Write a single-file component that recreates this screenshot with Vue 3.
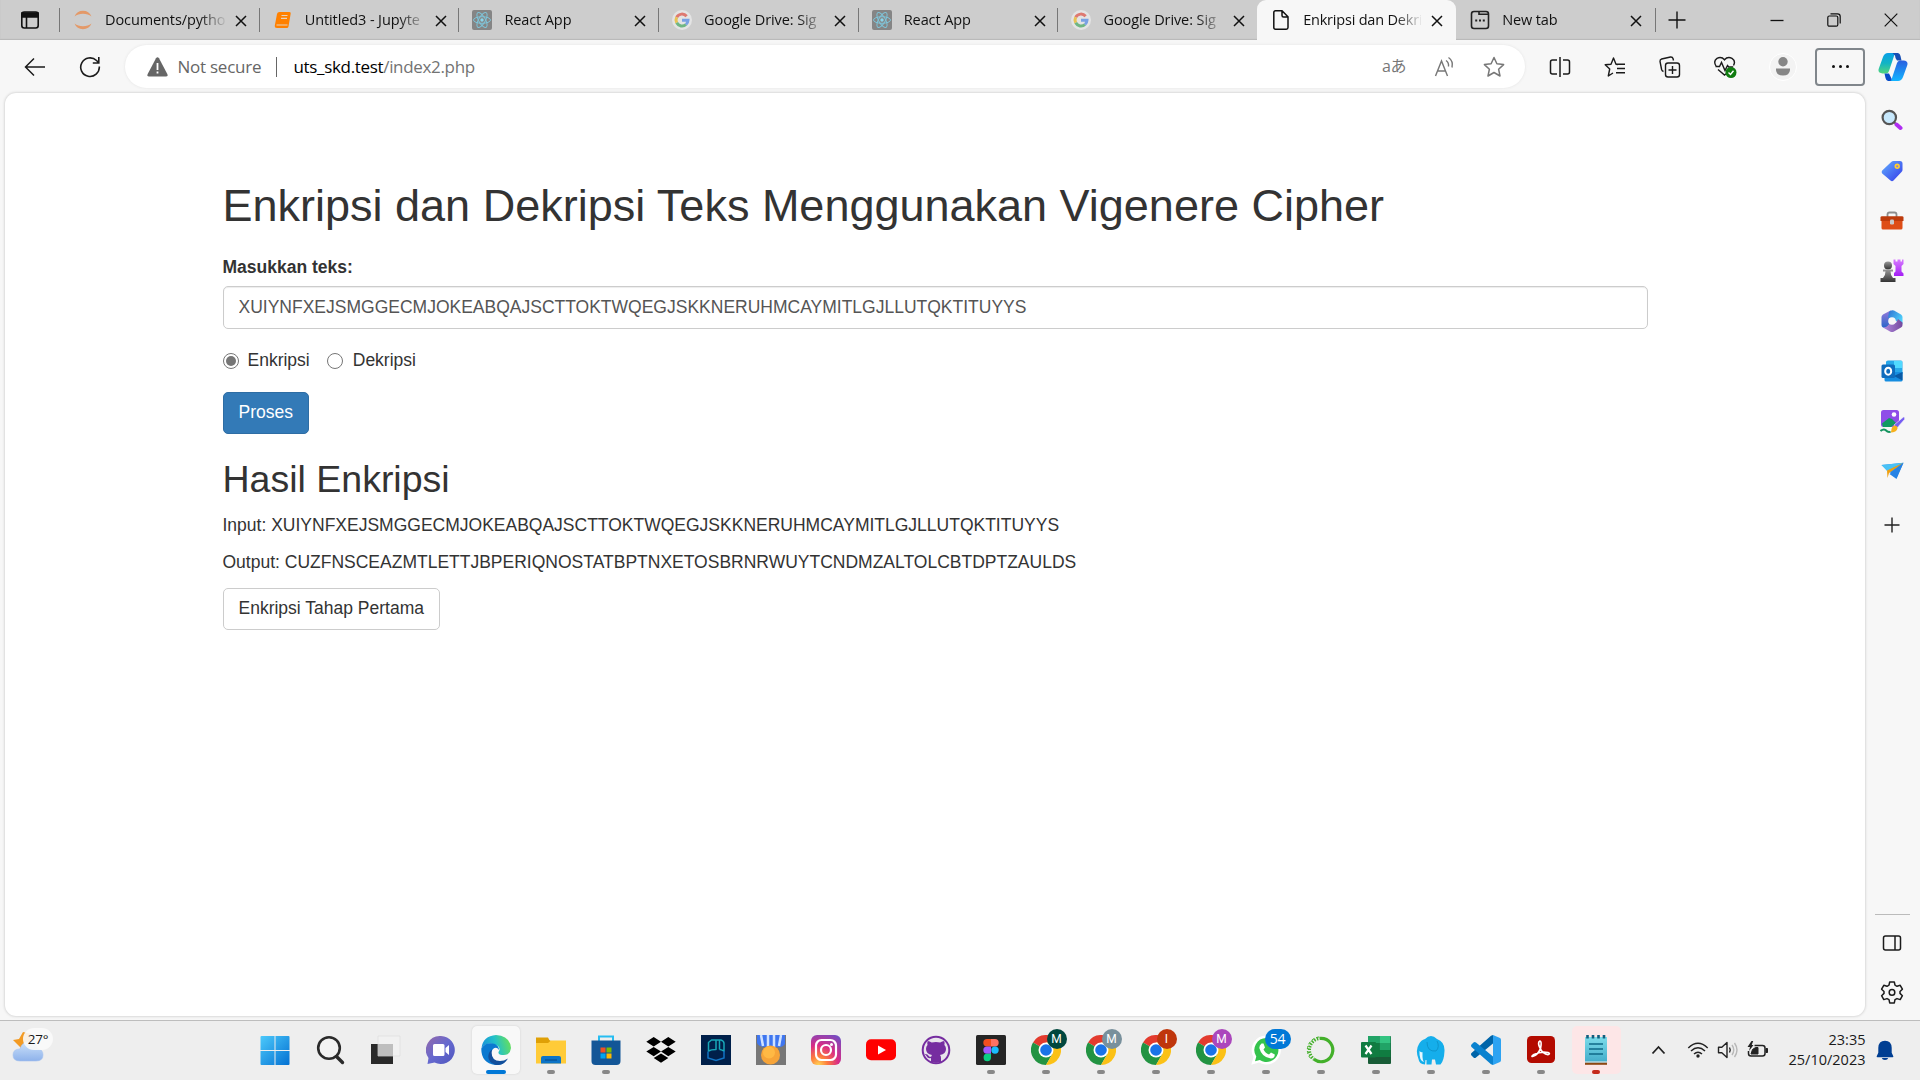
<script setup>
import { ref } from 'vue'

const tabs = [
  { icon: 'jupyter', title: 'Documents/pytho' },
  { icon: 'book', title: 'Untitled3 - Jupyte' },
  { icon: 'react', title: 'React App' },
  { icon: 'google', title: 'Google Drive: Sig' },
  { icon: 'react', title: 'React App' },
  { icon: 'google', title: 'Google Drive: Sig' },
  { icon: 'page', title: 'Enkripsi dan Dekri', active: true },
  { icon: 'newtab', title: 'New tab', bare: true }
]
const profiles = [
  { letter: 'M', color: '#00473e' },
  { letter: 'M', color: '#78909c' },
  { letter: 'I', color: '#bf360c' },
  { letter: 'M', color: '#ab47bc' }
]
const text = ref('XUIYNFXEJSMGGECMJOKEABQAJSCTTOKTWQEGJSKKNERUHMCAYMITLGJLLUTQKTITUYYS')
const output = 'CUZFNSCEAZMTLETTJBPERIQNOSTATBPTNXETOSBRNRWUYTCNDMZALTOLCBTDPTZAULDS'
const mode = ref('enkripsi')
</script>

<template>
  <div class="screen">
    <header class="tabbar">
      <div class="tab-actions">
        <svg width="20" height="20" viewBox="0 0 20 20" fill="none" stroke="#111" stroke-width="1.6"><rect x="1.8" y="2" width="16.4" height="16" rx="2.5" /><path d="M2 3h16v4H2z" fill="#111" /><path d="M6.5 7v11" /></svg>
      </div>
      <div v-for="(t, i) in tabs" :key="i" class="tab" :class="{ active: t.active, bare: t.bare }">
        <svg v-if="t.icon === 'jupyter'" class="fav dim" viewBox="0 0 20 20" fill="#f37726"><path d="M1.5 6.5C3 2.8 6 .8 10 .8s7 2 8.500 5.700C16 4.700 13.500 3.700 10 3.700S4 4.700 1.500 6.500zM1.500 13.500c1.500 3.700 4.500 5.700 8.500 5.700s7-2 8.500-5.700c-2.500 1.800-5 2.800-8.500 2.800s-6-1-8.500-2.800z" /></svg>
        <svg v-else-if="t.icon === 'book'" class="fav" viewBox="0 0 20 20"><path d="M6.500 2h10q1.500 0 1.200 1.500L15.500 16.500q-.300 1.500-1.800 1.500H4q-2.500 0-2.200-2.500L4 4Q4.400 2 6.500 2z" fill="#ff8000" /><path d="M8.500 5.500h6M8 8.300h6M3.500 15h11" stroke="#e6d3c0" stroke-width="1.200" /></svg>
        <svg v-else-if="t.icon === 'react'" class="fav" viewBox="0 0 20 20"><rect width="20" height="20" rx="2" fill="#858585" /><g fill="none" stroke="#7fc4d8" stroke-width="1"><ellipse cx="10" cy="10" rx="8.500" ry="3.300" /><ellipse cx="10" cy="10" rx="8.500" ry="3.300" transform="rotate(60 10 10)" /><ellipse cx="10" cy="10" rx="8.500" ry="3.300" transform="rotate(120 10 10)" /></g><circle cx="10" cy="10" r="1.700" fill="#8ad6ec" /></svg>
        <svg v-else-if="t.icon === 'google'" class="fav dim" viewBox="0 0 20 20"><circle cx="10" cy="10" r="10" fill="#f4f4f4" /><g fill="none" stroke-width="3"><path d="M14.600 6.300A6 6 0 0 0 4.700 7.200" stroke="#ea4335" /><path d="M4.700 7.200a6 6 0 0 0 0 5.600" stroke="#fbbc05" /><path d="M4.700 12.800a6 6 0 0 0 9.300 1.700" stroke="#34a853" /><path d="M14 14.500a6 6 0 0 0 2-4.200h-6" stroke="#4285f4" /></g></svg>
        <svg v-else-if="t.icon === 'page'" class="fav" viewBox="0 0 20 20" fill="none" stroke="#111" stroke-width="1.500"><path d="M4.500.800h6.500l6 6v10.700q0 1.700-1.700 1.700H4.500q-1.700 0-1.700-1.700v-15Q2.800.800 4.500.800zM11 1v4.500q0 1.500 1.500 1.500H17" /></svg>
        <svg v-else class="fav" viewBox="0 0 20 20" fill="none" stroke="#222" stroke-width="1.600"><rect x="1.500" y="1.500" width="17" height="17" rx="2.500" /><path d="M9 2v2.300h9" /><path d="M5.200 10.500h2M9 10.500h2M12.800 10.500h2" stroke-width="2.200" /></svg>
        <span class="title">{{ t.title }}</span>
        <svg class="close" width="12" height="12" viewBox="0 0 12 12" stroke="#111" stroke-width="1.500"><path d="M1 1l10 10M11 1L1 11" /></svg>
      </div>
      <div class="newtab"><svg width="18" height="18" viewBox="0 0 18 18" stroke="#111" stroke-width="1.400"><path d="M9 .5v17M.5 9h17" /></svg></div>
      <div class="winbtns">
        <span><svg width="14" height="14" viewBox="0 0 14 14" stroke="#111" stroke-width="1.300"><path d="M.5 7.500h13" /></svg></span>
        <span><svg width="14" height="14" viewBox="0 0 14 14" fill="none" stroke="#111" stroke-width="1.200"><rect x=".800" y="3" width="10" height="10.200" rx="1.500" /><path d="M3.500.800h7q2.700 0 2.700 2.700v7" /></svg></span>
        <span><svg width="14" height="14" viewBox="0 0 14 14" stroke="#111" stroke-width="1.200"><path d="M.7.700l12.600 12.600M13.300.700L.7 13.300" /></svg></span>
      </div>
    </header>

    <div class="toolbar">
      <div class="nav">
        <span><svg width="22" height="20" viewBox="0 0 22 20" fill="none" stroke="#1b1b1b" stroke-width="1.500"><path d="M10 1.500L1.500 10l8.500 8.500M1.500 10H21" /></svg></span>
        <span><svg width="22" height="22" viewBox="0 0 22 22" fill="none" stroke="#1b1b1b" stroke-width="1.600"><path d="M20.300 10.500A9.300 9.300 0 1 1 17.500 4.500l2 2M19.800 1v6h-6" /></svg></span>
      </div>
      <div class="address">
        <svg width="21" height="20" viewBox="0 0 21 20"><path d="M9 1.200q1.500-1.900 3 0l8.300 15.800q.900 2.300-1.400 2.500H2.100Q-.2 19.300.7 17z" fill="#666" /><path d="M10.500 6v7M10.500 14.500v2" stroke="#fff" stroke-width="1.800" /></svg>
        <span class="notsecure">Not secure</span><i class="bar"></i>
        <span class="url"><b>uts_skd.test</b>/index2.php</span>
        <div class="addr-icons">
          <span class="aa">aあ</span>
          <span><svg width="22" height="22" viewBox="0 0 22 22" fill="none" stroke="#777" stroke-width="1.400"><path d="M2.500 20L8.500 5l6 15M4.500 15h8" /><path d="M13 4.500q3 2 2.500 6M15.500 1.500q5 3.500 3.500 10" /></svg></span>
          <span><svg width="22" height="22" viewBox="0 0 22 22" fill="none" stroke="#777" stroke-width="1.500" stroke-linejoin="round"><path d="M11 1.500l2.900 6.300 6.700.8-5 4.600 1.400 6.800-6-3.500L5 20l1.400-6.800-5-4.600 6.700-.8z" /></svg></span>
        </div>
      </div>
      <div class="tools">
        <span><svg width="22" height="20" viewBox="0 0 22 20" fill="none" stroke="#1b1b1b" stroke-width="1.500"><path d="M8 3H3.500Q1.500 3 1.500 5v10q0 2 2 2H8M14 3h4.500q2 0 2 2v10q0 2-2 2H14M11 0v20" /></svg></span>
        <span><svg width="22" height="22" viewBox="0 0 22 22" fill="none" stroke="#1b1b1b" stroke-width="1.400" stroke-linejoin="round"><path d="M14 8.500l-2-.3L9.500 2 7 8.200l-5.800.6 4.500 4.200L4.300 20 9 17M12.500 8.200H21M13 12.500h8M12 16.800h9" /></svg></span>
        <span><svg width="22" height="22" viewBox="0 0 22 22" fill="none" stroke="#1b1b1b" stroke-width="1.400"><rect x="6.500" y="7" width="14" height="14" rx="2.500" /><path d="M13.500 10v8M9.500 14h8M4.500 15.500Q3 15 2.600 13.500L1 5.500Q.8 3.500 2.600 3L11.500 1q2-.2 2.500 1.500l.5 2" /></svg></span>
        <span><svg width="24" height="24" viewBox="0 0 24 24" fill="none" stroke="#1b1b1b" stroke-width="1.400"><path d="M3 11Q0 6 4 3.300q4.500-2 7.500 1.500Q14.500 1.300 19 3.300 23 6 20.500 10.500M2.500 11.500h4l2-4 3.500 8 2.500-5 1.200 1.500h4.500M5 14.500l6.500 5.500 2-1.500" /><circle cx="18" cy="17.500" r="5.500" fill="#107c10" stroke="none" /><path d="M15.500 17.500l2 2 3-3.800" stroke="#fff" /></svg></span>
        <span class="profile"><svg width="28" height="28" viewBox="0 0 28 28"><circle cx="14" cy="14" r="13.500" fill="#f3f3f3" stroke="#fff" /><circle cx="14" cy="8.800" r="4.700" fill="#868686" /><path d="M7 15.500h14v1.500q-.5 5.500-7 5.500T7 17z" fill="#868686" /></svg></span>
        <span class="more"><i></i><i></i><i></i></span>
      </div>
      <div class="copilot">
        <svg width="30" height="28" viewBox="0 0 30 28"><defs><linearGradient id="cpA" x1="0" y1="0" x2="0" y2="1"><stop offset="0" stop-color="#0aa0e8" /><stop offset=".5" stop-color="#12b4c4" /><stop offset="1" stop-color="#52d67c" /></linearGradient><linearGradient id="cpB" x1="0" y1="0" x2="0" y2="1"><stop offset="0" stop-color="#2a5fe0" /><stop offset="1" stop-color="#12b5ff" /></linearGradient></defs><path d="M18 0h-8Q6.500 0 5 4L1 15q-2 5 3.500 5.500h3.700Q10.500 20 11 18L16 3q.5-2 2-3z" fill="url(#cpA)" /><path d="M12 28h8q3.500 0 5-4l4-11q2-5-3.500-5.500h-3.700Q19.500 8 19 10L14 25q-.5 2-2 3z" fill="url(#cpB)" /><path d="M14.500 0H20q2 .5 2.500 3l1 4.500h-4.500Q17 5 17 2.500z" fill="#174fb5" /><path d="M6.500 20.500H11l2.500 5q.5 2-1 2.500H10q-2-.5-2.500-3z" fill="#084cc8" /></svg>
      </div>
    </div>

    <div class="middle">
      <main class="page">
        <div class="container">
          <h1>Enkripsi dan Dekripsi Teks Menggunakan Vigenere Cipher</h1>
          <label class="lbl">Masukkan teks:</label>
          <input v-model="text" class="control" type="text" />
          <div class="radios">
            <span class="radio" :class="{ on: mode === 'enkripsi' }"></span><span class="rl">Enkripsi</span>
            <span class="radio" :class="{ on: mode === 'dekripsi' }"></span><span>Dekripsi</span>
          </div>
          <button class="btn primary">Proses</button>
          <h2>Hasil Enkripsi</h2>
          <p>Input: {{ text }}</p>
          <p>Output: {{ output }}</p>
          <button class="btn">Enkripsi Tahap Pertama</button>
        </div>
      </main>
      <aside class="sidebar">
        <div class="slot"><svg width="22" height="22" viewBox="0 0 22 22"><path d="M13 13l3 3" stroke="#666" stroke-width="2" /><path d="M15.500 15.500l4 3.500" stroke="#b02df2" stroke-width="4" stroke-linecap="round" /><circle cx="8.300" cy="8.500" r="6.700" fill="#c7e8fc" stroke="#555" stroke-width="2.200" /></svg></div>
        <div class="slot"><svg width="22" height="22" viewBox="0 0 22 22"><defs><linearGradient id="tg" x1="0" y1="0" x2="1" y2="1"><stop offset="0" stop-color="#62b0ff" /><stop offset="1" stop-color="#3438e8" /></linearGradient></defs><path d="M12.500 1H19q2.500 0 2.500 2.500V10q0 1-1 2l-8 8.500q-1.500 1.500-3 0L1.200 13.500q-1.200-1.500 0-3l9-8.500q1-1 2.300-1z" fill="url(#tg)" /><circle cx="16.200" cy="6.300" r="1.900" fill="#8d79d8" stroke="#ffd02c" stroke-width="1.600" /></svg></div>
        <div class="slot"><svg width="24" height="20" viewBox="0 0 24 20"><path d="M7.500 6V3.500Q7.500 1.500 9.500 1.500h5q2 0 2 2V6" fill="none" stroke="#8d8d8d" stroke-width="1.800" /><path d="M1.500 9h21v8q0 1.500-1.500 1.500H3q-1.500 0-1.500-1.500z" fill="#de4d16" /><path d="M.5 6.500Q.5 5.300 2 5.300h20q1.500 0 1.500 1.200V10H.5z" fill="#bd3b0c" /><rect x="10" y="8.500" width="4" height="5" rx="1.200" fill="#c9c9c9" /></svg></div>
        <div class="slot"><svg width="24" height="24" viewBox="0 0 24 24"><defs><linearGradient id="pw" x1="0" y1="0" x2="0" y2="1"><stop offset="0" stop-color="#999" /><stop offset="1" stop-color="#333" /></linearGradient><linearGradient id="rk" x1="0" y1="0" x2="0" y2="1"><stop offset="0" stop-color="#d77bff" /><stop offset="1" stop-color="#a41ff5" /></linearGradient></defs><path d="M13.500.5h2v2h2v-2h3v2h1.500v-2h1.500V5l-2 2v5.500l2 2v2.500H14V14l1.500-1.500V7l-2-2z" fill="url(#rk)" /><circle cx="8" cy="6.500" r="4" fill="url(#pw)" /><path d="M3 10.500h10v2h-2.500q0 4 2.500 6.500h2.500v4H.5v-4H3q2.500-2.500 2.500-6.500H3z" fill="url(#pw)" /></svg></div>
        <div class="slot"><svg width="22" height="24" viewBox="0 0 22 24"><defs><linearGradient id="ml" x1="0" y1="0" x2="0" y2="1"><stop offset="0" stop-color="#9a7bdc" /><stop offset="1" stop-color="#2465c8" /></linearGradient><linearGradient id="mr" x1="0" y1="0" x2="1" y2=".6"><stop offset="0" stop-color="#2f6fd0" /><stop offset="1" stop-color="#4fd0fb" /></linearGradient><linearGradient id="mb" x1="0" y1="0" x2="1" y2="0"><stop offset="0" stop-color="#b48ce0" /><stop offset="1" stop-color="#744a9e" /></linearGradient></defs><path d="M10 1.200L2 5.500Q.5 6.500.5 8v8q0 1.500 1.500 2.500l3 1 3.500-4.500V6.500z" fill="url(#ml)" /><path d="M8 3q2-2.500 5-1.500l7 4q1.500 1 1.500 2.500v7L15 12 7 8.500z" fill="url(#mr)" /><path d="M21.500 13.500V16q0 1.500-1.500 2.500l-7 4q-2 1-4 0l-7-4q3.500 0 5-2l3-3.500 5 1 2-4z" fill="url(#mb)" /><circle cx="11" cy="12" r="3.800" fill="#f7f7f7" /></svg></div>
        <div class="slot"><svg width="22" height="22" viewBox="0 0 22 22"><path d="M7 .5h13q1.500 0 1.500 1.500v12H5V2q0-1.500 2-1.500z" fill="#28a8ea" /><path d="M13 1h8v7h-8z" fill="#50d9ff" /><path d="M3.500 12h18v8q0 1.500-1.500 1.500H5q-1.500 0-1.500-1.500z" fill="#168de0" /><path d="M21.500 12v8.500L13 16z" fill="#0a5aa5" /><rect x=".5" y="4.500" width="13.500" height="13.500" rx="1.500" fill="#0f6cbd" /><ellipse cx="7.200" cy="11.200" rx="3" ry="3.500" fill="none" stroke="#fff" stroke-width="2" /></svg></div>
        <div class="slot"><svg width="25" height="25" viewBox="0 0 25 25"><rect x="1" y="1" width="18" height="17" rx="2.500" fill="#8f4de8" /><path d="M2 14.500l7-5.500 3 1 4 4-5 4H3z" fill="#129a63" /><circle cx="14" cy="5.500" r="2.300" fill="#fff" /><path d="M14 16L23.500 8q2 .5 1 2.500L17 19z" fill="#765df2" stroke="#f7f7f7" stroke-width=".6" /><path d="M14.500 16.500q3 0 3 3-1 4-7 4 1-1 1-3.500 1-3.500 3-3.500z" fill="#f7b11c" /><path d="M.5 22q3-2.500 5-1 3 3 5 1.500" stroke="#14945e" stroke-width="2" fill="none" /></svg></div>
        <div class="slot"><svg width="23" height="18" viewBox="0 0 23 18"><path d="M.5 3L22.500.8 15.500 16z" fill="#2c8bec" /><path d="M.5 3L22.500.8 6 9z" fill="#49c2f6" /><path d="M6 8.500L22.500.8 8 11l-1.500 5z" fill="#f0a010" /><path d="M8.500 12L22.500.8 15.500 17z" fill="#2683e5" /></svg></div>
        <div class="slot plus"><svg width="16" height="16" viewBox="0 0 16 16" stroke="#222" stroke-width="1.400"><path d="M8 .5v15M.5 8h15" /></svg></div>
        <div class="grow"></div>
        <i class="rule"></i>
        <div class="slot low"><svg width="20" height="16" viewBox="0 0 20 16" fill="none" stroke="#1b1b1b" stroke-width="1.500"><rect x="1.500" y="1" width="17" height="14" rx="2" /><path d="M13 1v14" /></svg></div>
        <div class="slot"><svg width="24" height="24" viewBox="0 0 24 24" fill="none" stroke="#1b1b1b" stroke-width="1.500" stroke-linejoin="round"><path d="M9.700 2h4.600l.7 3.200 2 1.100 3.200-1 2.200 3.900-2.400 2.300v1.900l2.400 2.300-2.200 3.900-3.200-1-2 1.100-.7 3.200H9.700L9 19.700l-2-1.100-3.200 1-2.200-3.900L4 13.400v-1.900L1.600 9.200l2.200-3.900 3.200 1 2-1.100z" /><circle cx="12" cy="12.400" r="2.800" /></svg></div>
      </aside>
    </div>

    <footer class="taskbar">
      <div class="weather">
        <svg width="36" height="42" viewBox="0 0 36 42"><defs><linearGradient id="cl" x1="0" y1="0" x2="0" y2="1"><stop offset="0" stop-color="#cde2fa" /><stop offset="1" stop-color="#8eb2eb" /></linearGradient></defs><path d="M1 16l6-1 4-7 8 2v12l-10 2z" fill="#f39a22" /><path d="M8 37q-7 0-7-6 0-6 7-6 2-8 10-7 7 1 7 7 6 0 6 6t-7 6z" fill="url(#cl)" stroke="#a4c1ee" stroke-width=".6" /></svg>
        <span class="temp">27°</span>
      </div>
      <div class="apps">
        <div class="app start"><svg viewBox="0 0 30 30"><defs><linearGradient id="wn" x1="0" y1="0" x2="1" y2="1"><stop offset="0" stop-color="#4cc9fb" /><stop offset="1" stop-color="#0471d2" /></linearGradient></defs><path d="M.5 2q0-1 1-1h13v14H.5zM15.500 1h13q1 0 1 1v13h-14zM.5 16h14v14h-13q-1 0-1-1zM15.500 16h14v13q0 1-1 1h-13z" fill="url(#wn)" /></svg></div>
        <div class="app"><svg viewBox="0 0 30 30" fill="none" stroke="#2a2a2a"><circle cx="13" cy="13" r="10.800" stroke-width="2.600" fill="#f2f2f2" /><path d="M20.500 21.500l6 6" stroke-width="3.400" stroke-linecap="round" /></svg></div>
        <div class="app"><svg viewBox="0 0 30 30"><path d="M0 9h22v20H0z" fill="#292929" /><path d="M7 1h22v20H7z" fill="#f1f1f1" stroke="#ddd" stroke-width=".7" /><path d="M7 9h15v12H7z" fill="#bebebe" /></svg></div>
        <div class="app"><svg viewBox="0 0 30 30"><defs><linearGradient id="ct" x1="0" y1="0" x2="1" y2="1"><stop offset="0" stop-color="#9569a9" /><stop offset=".5" stop-color="#6669cf" /><stop offset="1" stop-color="#4e55bd" /></linearGradient></defs><path d="M15 1a14 14 0 1 1-6.500 26.500L1.500 29l1-6A14 14 0 0 1 15 1z" fill="url(#ct)" /><path d="M7 10.500Q7 9 8.500 9H17q1.500 0 1.500 1.500v9Q18.500 21 17 21H8.500Q7 21 7 19.500zM19.500 13l3.500-3v10l-3.500-3z" fill="#fff" /></svg></div>
        <div class="app focus run"><svg viewBox="0 0 30 30"><defs><linearGradient id="e1" x1="0" y1=".6" x2="1" y2=".4"><stop offset="0" stop-color="#198fdb" /><stop offset=".5" stop-color="#23c1c9" /><stop offset="1" stop-color="#67e05a" /></linearGradient></defs><path d="M15 0q14 1 15 13-1 8-9 7-4-.5-3.500-3 2.500-3-.5-6Q7 5 .5 13 2 1 15 0z" fill="url(#e1)" /><path d="M.3 13.500Q5 6 14 9q4 2 4 6-2.500-4-6-1-5 6 2 12 5 4 11 0-5 5-11 4Q0 28 .3 13.500z" fill="#0b79d0" /><path d="M11 14.500q-2 11 8 11.500 4 0 8-2.500-4 7-12 6.500Q5 27 8 18q1-2.500 3-3.500z" fill="#124f9c" /></svg></div>
        <div class="app run"><svg viewBox="0 0 30 30"><path d="M0 2.500h12q1 3 3 3.500H30v5H0z" fill="#dfa006" /><path d="M0 8h12l3-2.500h15v23H0z" fill="#ffcb38" /><path d="M5 28.500V23q0-2 2-2h16q2 0 2 2v5.500z" fill="#0c74c7" /><path d="M9 25h12" stroke="#07569b" stroke-width="1.500" /></svg></div>
        <div class="app run"><svg viewBox="0 0 30 30"><path d="M8 7V1.500h14V7" fill="none" stroke="#27bdf1" stroke-width="2" /><path d="M.5 5.500h29V26q0 4-4 4H4.500q-4 0-4-4z" fill="#135697" /><path d="M9.500 12.500h5v5h-5z" fill="#f25022" /><path d="M15.500 12.500h5v5h-5z" fill="#7fba00" /><path d="M9.500 18.500h5v5h-5z" fill="#00a4ef" /><path d="M15.500 18.500h5v5h-5z" fill="#ffb900" /></svg></div>
        <div class="app"><svg viewBox="0 0 30 30"><path d="M7.700 2L15 6.700 7.700 11.400.3 6.700zM22.300 2l7.400 4.700-7.400 4.700L15 6.700zM7.700 12L15 16.600l-7.300 4.700-7.400-4.700zM22.300 12l7.400 4.600-7.400 4.700L15 16.600zM15 18.500l7.300 4.500-7.300 4.700L7.700 23z" fill="#000" /></svg></div>
        <div class="app"><svg viewBox="0 0 30 30"><path d="M0 0h30v30H0z" fill="#00204a" /><g fill="none" stroke="#18a6b8" stroke-width="1.500" stroke-linejoin="round"><path d="M7.500 16V7.500l3-2.500h4.500v9.500q-5 0-7.500 1.500zM15 5h5q3 1 3 3.500V16q-3-1.500-4.500-1.500" /><path d="M18.500 5v9.500" /></g><path d="M7 16.500V23l8 2.500 8-2.500v-7" fill="none" stroke="#1173c4" stroke-width="1.500" /></svg></div>
        <div class="app"><svg viewBox="0 0 30 30"><path d="M0 0h30v30H0z" fill="#777" /><path d="M1 0h28v9q-3 4-9 3H10q-7 0-9-4z" fill="#3f76ef" /><path d="M5 0l2 11M12 0v12M18 0v12M25 0l-2 11" stroke="#d0e2ff" stroke-width="2.500" /><circle cx="14.500" cy="20" r="9.500" fill="#f7a438" /><circle cx="13" cy="17.500" r="6" fill="#ffb944" /></svg></div>
        <div class="app"><svg viewBox="0 0 30 30"><defs><radialGradient id="ig" cx=".25" cy="1" r="1.200"><stop offset="0" stop-color="#ffd455" /><stop offset=".25" stop-color="#fd7b3c" /><stop offset=".55" stop-color="#d92c85" /><stop offset="1" stop-color="#6950c9" /></radialGradient></defs><rect width="30" height="30" rx="6" fill="url(#ig)" /><g fill="none" stroke="#fff" stroke-width="2.200"><rect x="5" y="5" width="20" height="20" rx="5.500" /><circle cx="15" cy="15" r="5" /></g><circle cx="20.500" cy="9.500" r="1.500" fill="#fff" /></svg></div>
        <div class="app"><svg viewBox="0 0 30 30"><rect y="4.300" width="30" height="21" rx="5" fill="#f00" /><path d="M12 10.500l8 4.500-8 4.500z" fill="#fff" /></svg></div>
        <div class="app"><svg viewBox="0 0 30 30"><circle cx="15" cy="15" r="13.300" fill="#e9e4ec" stroke="#762da0" stroke-width="2" /><path d="M10 27v-4q-3 1-4.500-2-1-1.500-2-2 3-.5 4.300 2 1 1.200 2.400.7.200-1.200.8-1.700-6-1-6-6 0-2.500 1.500-4-.6-2 .2-4 2 0 4 1.500 4.200-1 8.500 0 2-1.500 4-1.500.8 2 .2 4 1.600 1.500 1.600 4 0 5-6 6 1 1 1 3V27q-5 1.500-10 0z" fill="#762da0" /></svg></div>
        <div class="app run"><svg viewBox="0 0 30 30"><rect width="30" height="30" rx="1.500" fill="#252525" /><path d="M15 4h-4a3.700 3.700 0 0 0 0 7.400h4z" fill="#f24e1e" /><path d="M15 4h4a3.700 3.700 0 0 1 0 7.400h-4z" fill="#ff7262" /><path d="M15 11.400h-4a3.700 3.700 0 0 0 0 7.400h4z" fill="#a259ff" /><circle cx="19" cy="15.100" r="3.700" fill="#1abcfe" /><path d="M15 18.800h-4a3.700 3.700 0 1 0 4 3.700z" fill="#0acf83" /></svg></div>
        <div v-for="(p, i) in profiles" :key="'c' + i" class="app run">
          <svg viewBox="0 0 30 30"><path d="M15 15L2 7.500A15 15 0 0 1 28 7.500H15z" fill="#e33b2e" /><path d="M15 15l6.500 3.700L15 30A15 15 0 0 1 2 7.500z" fill="#229342" /><path d="M15 7.500h13A15 15 0 0 1 15 30l6.500-11.300z" fill="#fbc116" /><circle cx="15" cy="15" r="7.500" fill="#fff" /><circle cx="15" cy="15" r="5.800" fill="#1a73e8" /></svg>
          <span class="badge" :style="{ background: p.color }">{{ p.letter }}</span>
        </div>
        <div class="app run"><svg viewBox="0 0 30 30"><path d="M15.500.5a14.500 14.500 0 1 1-7.500 27L.3 29.700 2.500 22A14.500 14.500 0 0 1 15.500.5z" fill="#fff" /><path d="M15.500 3a12 12 0 1 1-6.700 22L4 26.300 5.300 21.500A12 12 0 0 1 15.500 3z" fill="#35c34c" /><path d="M10.500 8.500h2l1.500 4-1.500 2q2 4 5.500 5l2-2 3.800 2q0 4-4 4-9-1-11.500-10.500 0-3 2.200-4.500z" fill="#fff" /></svg><span class="count">54</span></div>
        <div class="app run"><svg viewBox="0 0 30 30" fill="none" stroke="#43b02a"><path d="M15 3.300a11.700 11.700 0 1 1-7 21" stroke-width="3.200" /><path d="M15 3.300a11.700 11.700 0 0 0-7 21" stroke-width="3.200" stroke-dasharray="1.500 1.300" /><path d="M13 2A13 13 0 0 0 5 24" stroke-width="1" stroke-dasharray="3 2" /></svg></div>
        <div class="app run"><svg viewBox="0 0 30 30"><path d="M8 1h21q1 0 1 1v26q0 1-1 1H8q-1 0-1-1V2q0-1 1-1z" fill="#185c37" /><path d="M7 1h11.500v7H7z" fill="#21a366" /><path d="M18.500 1H29q.5 0 .5 1v6h-11z" fill="#33c481" /><path d="M18.500 8h11v7h-11z" fill="#21a366" /><path d="M7 8h11.500v14H7zM18.500 15h11v7h-11z" fill="#107c41" /><rect y="7" width="15" height="15.500" rx="1" fill="#107c41" /><path d="M4.500 10.500l6 8.500M10.500 10.500l-6 8.500" stroke="#fff" stroke-width="2.200" /></svg></div>
        <div class="app run"><svg viewBox="0 0 30 30"><path d="M9 4q6-6 12 0 8 3 7.500 12-.5 10-4 13.500H20l-1-5h-3l-.5 5h-5V25H9.500L9 29.500Q3 29 2.500 24-1 15 3 9q2-4 6-5z" fill="#15aeeb" /><path d="M11 7q0 10 9 9 4-4 1-10" fill="none" stroke="#0e95cd" stroke-width="1" /><path d="M3.500 16q2 2 3 1v5q0 3 1.500 5Q3 26 3.500 16z" fill="#e8f8ff" /></svg></div>
        <div class="app run"><svg viewBox="0 0 30 30"><path d="M22 0l7 3q1 .5 1 2v20q0 1.500-1 2l-7 3z" fill="#2da3f2" /><path d="M22 0v8.500L5 22.500q-1.200 1-2.500 0l-2-2q-1-1.300 0-2.500L20 .8z" fill="#0065a9" /><path d="M22 30v-8.500L5 7.500q-1.200-1-2.500 0l-2 2q-1 1.300 0 2.500L20 29.200z" fill="#0a82cf" /></svg></div>
        <div class="app run"><svg viewBox="0 0 30 30"><rect x="1" y="1" width="28" height="27" rx="4.500" fill="#b30b00" /><path d="M6.500 21.500q5-1 8-8 1.500-7-.5-7.500-2.500 1-.5 6 3.500 8 9 7.500 2-1-.5-2-7-1.500-14 2-3 2-1.500 2z" fill="none" stroke="#fff" stroke-width="1.700" /></svg></div>
        <div class="app run alert"><svg viewBox="0 0 30 30"><defs><linearGradient id="np" x1="0" y1="0" x2="0" y2="1"><stop offset="0" stop-color="#7ddcea" /><stop offset="1" stop-color="#42abc9" /></linearGradient></defs><path d="M4 2h22v26H4z" fill="url(#np)" /><path d="M4 27.500h22v2.300H4z" fill="#8c4712" /><path d="M4 26.500h22v1H4z" fill="#eee" /><path d="M6.500 0v3.500M12 0v3.500M17.500 0v3.500M23 0v3.500" stroke="#135f7e" stroke-width="2.600" /><path d="M8 9h14M8 14h14M8 19h14" stroke="#0f6988" stroke-width="1.700" /></svg></div>
      </div>
      <div class="tray">
        <span class="chev"><svg width="15" height="10" viewBox="0 0 15 10" fill="none" stroke="#222" stroke-width="1.800"><path d="M1.500 8.500l6-6.500 6 6.500" /></svg></span>
        <span><svg width="22" height="18" viewBox="0 0 22 18" fill="none" stroke="#222" stroke-width="1.500"><path d="M1.300 7Q11-2.500 20.700 7M4 10q7-6.500 14 0M7 13q4-3.500 8 0" /><circle cx="11" cy="15" r="1.700" fill="#222" stroke="none" /></svg></span>
        <span><svg width="22" height="18" viewBox="0 0 22 18" fill="none" stroke="#222" stroke-width="1.400"><path d="M1.500 6.300h3.300L10 1.500v15L4.800 11.700H1.500z" stroke-linejoin="round" /><path d="M12.500 6.500q1.500 2.500 0 5" /><path d="M15 4q3.500 5 0 10M17.500 2q5 7 0 14" stroke="#b8b8b8" /></svg></span>
        <span><svg width="22" height="18" viewBox="0 0 22 18"><path d="M7.500 4.500h8q2.500 0 2.500 2.500v5.500q0 2.500-2.500 2.500H4Q1.500 15 1.500 12.500V10" fill="none" stroke="#222" stroke-width="1.500" /><path d="M4 13l1.500-4.500 3-2H11V13zM19 7.500h1.500v4H19z" fill="#222" stroke="#222" /><path d="M4.500 0L.5 6H3L2 10l4.500-6H4.700l1.500-4z" fill="#222" /></svg></span>
        <div class="clock"><div>23:35</div><div>25/10/2023</div></div>
        <svg class="bell" width="18" height="21" viewBox="0 0 18 21" fill="#003e92"><path d="M9 .800q6.500.200 6.700 7v5l1.600 3.500q.3.900-.7 1H1.400q-1-.1-.7-1l1.600-3.500v-5Q2.500 1 9 .800zM5.800 18h6.400q-.5 2-3.200 2t-3.200-2z" /></svg>
      </div>
    </footer>
  </div>
</template>

<style>
body { margin: 0; overflow: hidden; }
</style>

<style scoped>
* { box-sizing: border-box; }
.screen { width: 1920px; height: 1080px; display: flex; flex-direction: column; background: #f7f7f7; font-family: "Open Sans", "Noto Sans", "Noto Sans CJK JP", sans-serif; color: #1a1a1a; overflow: hidden; }
svg { display: block; flex: none; }

.tabbar { height: 40px; flex: none; display: flex; align-items: stretch; background: #cdcdcd; box-shadow: inset 0 -1px 1px #b9b9b9; }
.tab-actions { width: 59px; display: flex; align-items: center; padding-left: 20px; }
.tab { width: 199.700px; flex: none; display: flex; align-items: center; padding-left: 14px; position: relative; font-size: 14.5px; letter-spacing: -.1px; color: #111; }
.tab::before { content: ""; position: absolute; left: 0; top: 8px; width: 1px; height: 24px; background: #777; }
.tab.active { width: 199px; background: #f7f7f7; border-radius: 9px 9px 0 0; letter-spacing: -.2px; }
.tab.bare { width: 198.500px; }
.tab.active .title, .tab.bare .title { width: 118px; }
.tab.active::before, .tab.bare::before { display: none; }
.fav { width: 20px; height: 20px; }
.fav.dim { opacity: .6; }
.title { width: 120px; margin-left: 12px; white-space: nowrap; line-height: 24px; mask-image: linear-gradient(90deg, #000 78%, transparent 102%); }
.close { margin-left: 10px; margin-top: 2px; }
.newtab { width: 44px; display: flex; align-items: center; padding-left: 13px; position: relative; }
.newtab::before { content: ""; position: absolute; left: 0; top: 8px; width: 1px; height: 24px; background: #777; }
.winbtns { margin-left: auto; display: flex; width: 172px; }
.winbtns span { width: 57.3px; display: flex; align-items: center; justify-content: center; }

.toolbar { height: 53px; flex: none; display: flex; align-items: center; }
.nav { width: 125px; display: flex; padding-left: 7px; }
.nav span { width: 55px; display: flex; align-items: center; justify-content: center; }
.address { width: 1400px; height: 43px; background: #fff; border-radius: 22px; box-shadow: 0 0 3px #e3e3e3; display: flex; align-items: center; padding-left: 22px; font-size: 17px; color: #666; }
.notsecure { width: 83px; margin-left: 9.500px; white-space: nowrap; letter-spacing: -.25px; }
.bar { width: 1px; height: 20px; background: #666; margin: 0 17px 0 15px; }
.url { letter-spacing: -.33px; color: #737373; }
.url b { font-weight: 400; color: #000; }
.addr-icons { margin-left: auto; display: flex; padding-right: 6px; }
.addr-icons span { width: 50px; height: 24px; display: flex; align-items: center; justify-content: center; }
.addr-icons .aa { font-size: 16px; letter-spacing: -.5px; color: #777; padding-bottom: 4px; }
.tools { display: flex; align-items: center; padding-left: 7px; }
.tools span { width: 55px; display: flex; align-items: center; justify-content: center; }
.tools .profile { width: 61px; }
.tools .more { width: 50px; height: 38px; margin-left: 2px; border: 2px solid #80868b; border-radius: 4px; gap: 4px; }
.more i { width: 3px; height: 3px; border-radius: 50%; background: #111; }
.copilot { width: 55px; display: flex; justify-content: center; }

.middle { flex: 1; min-height: 0; display: flex; }
.page { width: 1860px; height: 923px; margin-left: 5px; background: #fff; border-radius: 11px; box-shadow: 0 0 3px #bcbcbc; font-family: "Liberation Sans", Arial, sans-serif; font-size: 17.5px; line-height: 25px; color: #333; }
.container { width: 1425px; margin-left: 217.5px; padding-top: 88px; }
h1, h2 { font-weight: 500; line-height: 1.1; margin: 0; }
h1 { font-size: 45px; font-weight: 400; }
.lbl { display: block; font-weight: 700; margin: 24.500px 0 6.250px; }
.control { display: block; width: 100%; height: 42.750px; padding: 7.500px 15px; border: 1px solid #ccc; border-radius: 5px; font: inherit; color: #555; background: #fff; box-shadow: inset 0 1px 1px rgba(0, 0, 0, .075); outline: none; }
.radios { display: flex; align-items: center; margin-top: 18.750px; height: 25px; }
.radio { width: 16px; height: 16px; margin-top: 1px; border: 1.250px solid #767676; border-radius: 50%; background: #fff; display: flex; align-items: center; justify-content: center; margin-right: 9px; }
.radio.on::after { content: ""; width: 10px; height: 10px; border-radius: 50%; background: #767676; }
.rl { margin-right: 17px; }
.rl + .radio { margin-right: 10px; }
.btn { display: block; height: 42.500px; padding: 0 15px; border: 1px solid #ccc; border-radius: 5px; background: #fff; color: #333; font: inherit; }
.btn.primary { margin-top: 18.750px; background: #337ab7; border-color: #2e6da4; color: #fff; }
h2 { font-size: 37.500px; font-weight: 400; margin: 25px 0 12.500px; }
p { margin: 0 0 12.500px; }
p + p { margin-bottom: 12.250px; }

.sidebar { flex: 1; display: flex; flex-direction: column; align-items: center; padding: 2px 1px 0 0; }
.slot { height: 50.100px; flex: none; display: flex; align-items: center; justify-content: center; }
.slot:nth-child(n+2):nth-child(-n+8) svg { margin-top: 1px; }
.slot.plus { height: 58px; }
.grow { flex: 1; }
.rule { width: 35px; height: 1px; background: #bbb; margin-bottom: 3px; }
.slot:last-child { margin-bottom: 2px; padding-bottom: 2px; }

.taskbar { height: 60px; flex: none; display: flex; background: #eee; border-top: 1px solid #bdbdbd; }
.weather { width: 248.500px; padding: 3px 0 0 12px; position: relative; }
.temp { position: absolute; left: 23px; top: 7px; width: 30px; height: 22px; border-radius: 11px; background: rgba(250, 250, 250, .9); font-size: 13.500px; line-height: 22px; text-align: center; letter-spacing: -.3px; }
.apps { display: flex; }
.app { width: 55px; height: 59px; padding-bottom: 2px; position: relative; display: flex; align-items: center; justify-content: center; }
.app > svg { width: 30px; height: 30px; position: relative; }
.app.start > svg { margin-right: 3px; }
.app.run::after { content: ""; position: absolute; left: 23.500px; top: 49px; width: 8px; height: 4px; border-radius: 2px; background: #888; }
.app.focus::before, .app.alert::before { content: ""; position: absolute; left: 3.500px; top: 5px; width: 48px; height: 48px; border-radius: 5px; background: #f8f8f8; box-shadow: 0 0 2px #ccc; }
.app.focus::after { left: 17.500px; width: 20px; background: #0078d7; }
.app.alert::before { background: #fde6e7; box-shadow: none; width: 49px; }
.app.alert::after { background: #c42b1c; }
.badge { position: absolute; left: 28px; top: 8px; width: 20px; height: 20px; border-radius: 50%; color: #fff; font: 12px/20px Roboto, sans-serif; text-align: center; }
.count { position: absolute; left: 26px; top: 7.500px; width: 26px; height: 20px; border-radius: 10px; background: #0078d7; color: #fff; font-size: 14px; line-height: 20px; text-align: center; letter-spacing: -.2px; }
.tray { flex: 1; display: flex; align-items: center; padding: 0 0 2px 17px; }
.tray > span { width: 30px; display: flex; justify-content: center; }
.tray > .chev { width: 35px; margin-right: 7px; }
.clock { width: 93px; text-align: right; font-size: 14.500px; line-height: 20px; }
.bell { margin-left: 10px; margin-top: 2px; }
</style>
